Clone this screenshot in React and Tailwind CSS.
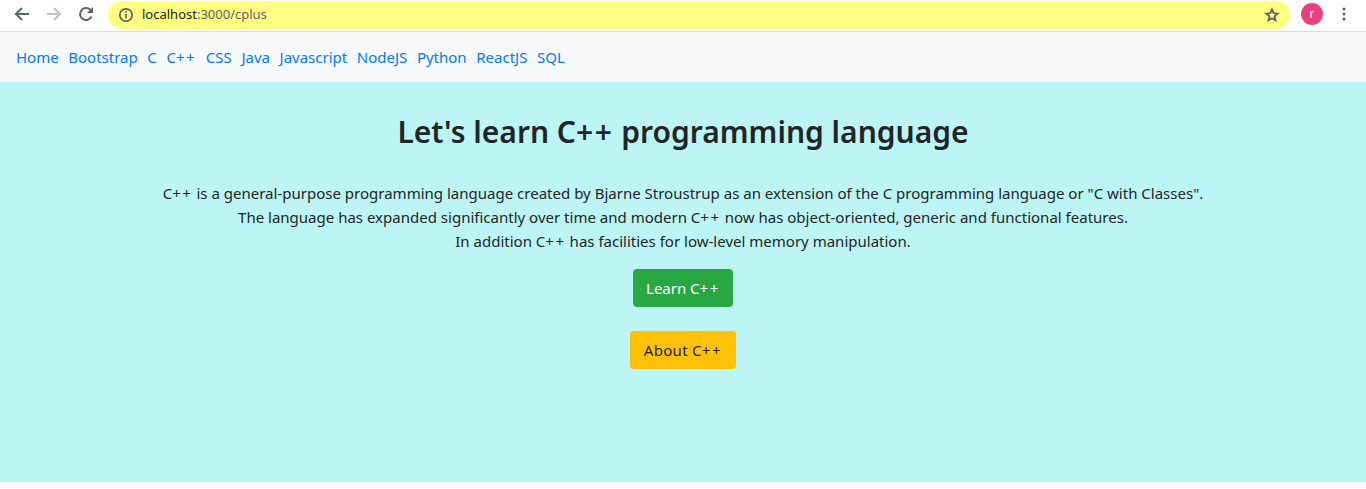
import React from "react";

const font = "font-['Noto_Sans','Open_Sans',sans-serif]";
const Plus = () => <span className="tracking-[1.6px]">++</span>;
const links = ["Home","Bootstrap","C",<>C<Plus /></>,"CSS","Java","Javascript","NodeJS","Python","ReactJS","SQL"];

export default function App() {
  return (
    <div className={`w-full h-[489px] bg-white flex flex-col ${font}`}>
      <div className="h-8 shrink-0 flex items-center border-b border-[#dadce0] bg-white pb-[3px]">
        <div className="w-[108px] flex items-center shrink-0">
          <svg className="ml-[14px]" width="16" height="16" viewBox="0 0 16 16" fill="none" stroke="#5f6368" strokeWidth="2"><path d="M15 8H2M8 2L2 8l6 6"/></svg>
          <svg className="ml-4" width="16" height="16" viewBox="0 0 16 16" fill="none" stroke="#bdc1c6" strokeWidth="2"><path d="M1 8h13M8 2l6 6-6 6"/></svg>
          <svg className="ml-4" width="16" height="16" viewBox="0 0 16 16" fill="none" stroke="#5f6368" strokeWidth="2"><path d="M13.5 10.5A6 6 0 1 1 12.3 3.8L14 5.5"/><path d="M15 1v6H9" fill="#5f6368" stroke="none"/></svg>
        </div>
        <div className="flex-1 h-7 mt-[1px] rounded-full bg-[#ffff80] flex items-center pl-[10px] pr-[10px]">
          <svg width="16" height="16" viewBox="0 0 16 16" fill="none" stroke="#5f6368" strokeWidth="1.7"><circle cx="8" cy="8" r="6.2"/><path d="M8 7v4.4M8 4v1.6"/></svg>
          <span className="ml-2 text-[13px] text-[#202124] leading-none">localhost<span className="text-[#5f6368]">:3000/cplus</span></span>
          <svg className="ml-auto" width="16" height="16" viewBox="0 0 16 16" fill="none" stroke="#5f6368" strokeWidth="1.8"><path d="M8 2.4l1.6 3.8 4.1.4-3.1 2.7.9 4L8 11.2l-3.5 2.1.9-4-3.1-2.7 4.1-.4z"/></svg>
        </div>
        <div className="ml-[11px] w-[22px] h-[22px] rounded-full bg-[#ec407a] flex items-center justify-center text-white text-[12px] leading-none">r</div>
        <svg className="ml-[19px] mr-[20px]" width="4" height="14" viewBox="0 0 4 14" fill="#5f6368"><circle cx="2" cy="2" r="1.5"/><circle cx="2" cy="7" r="1.5"/><circle cx="2" cy="12" r="1.5"/></svg>
      </div>
      <nav className="h-[50px] shrink-0 bg-[#f8f9fa] flex items-center px-4 gap-[9.6px] text-[15px] text-[#007bff]">
        {links.map((l, i) => <a key={i} href="#">{l}</a>)}
      </nav>
      <main className="h-[400px] shrink-0 bg-[#bcf5f3] flex flex-col items-center text-[#212529] text-center">
        <h1 className="mt-[27px] text-[30px] leading-[46px] font-semibold">Let's learn C<Plus /> programming language</h1>
        <p className="mt-[26px] text-[15.03px] leading-6">
          C<Plus /> is a general-purpose programming language created by Bjarne Stroustrup as an extension of the C programming language or "C with Classes".<br />
          The language has expanded significantly over time and modern C<Plus /> now has object-oriented, generic and functional features.<br />
          In addition C<Plus /> has facilities for low-level memory manipulation.
        </p>
        <button className="mt-4 h-[38px] w-[100px] rounded bg-[#28a745] text-white text-[15px]">Learn C<Plus /></button>
        <button className="mt-6 h-[38px] w-[106px] rounded bg-[#ffc107] text-[#212529] text-[15px] tracking-[0.3px]">About C<Plus /></button>
      </main>
    </div>
  );
}
